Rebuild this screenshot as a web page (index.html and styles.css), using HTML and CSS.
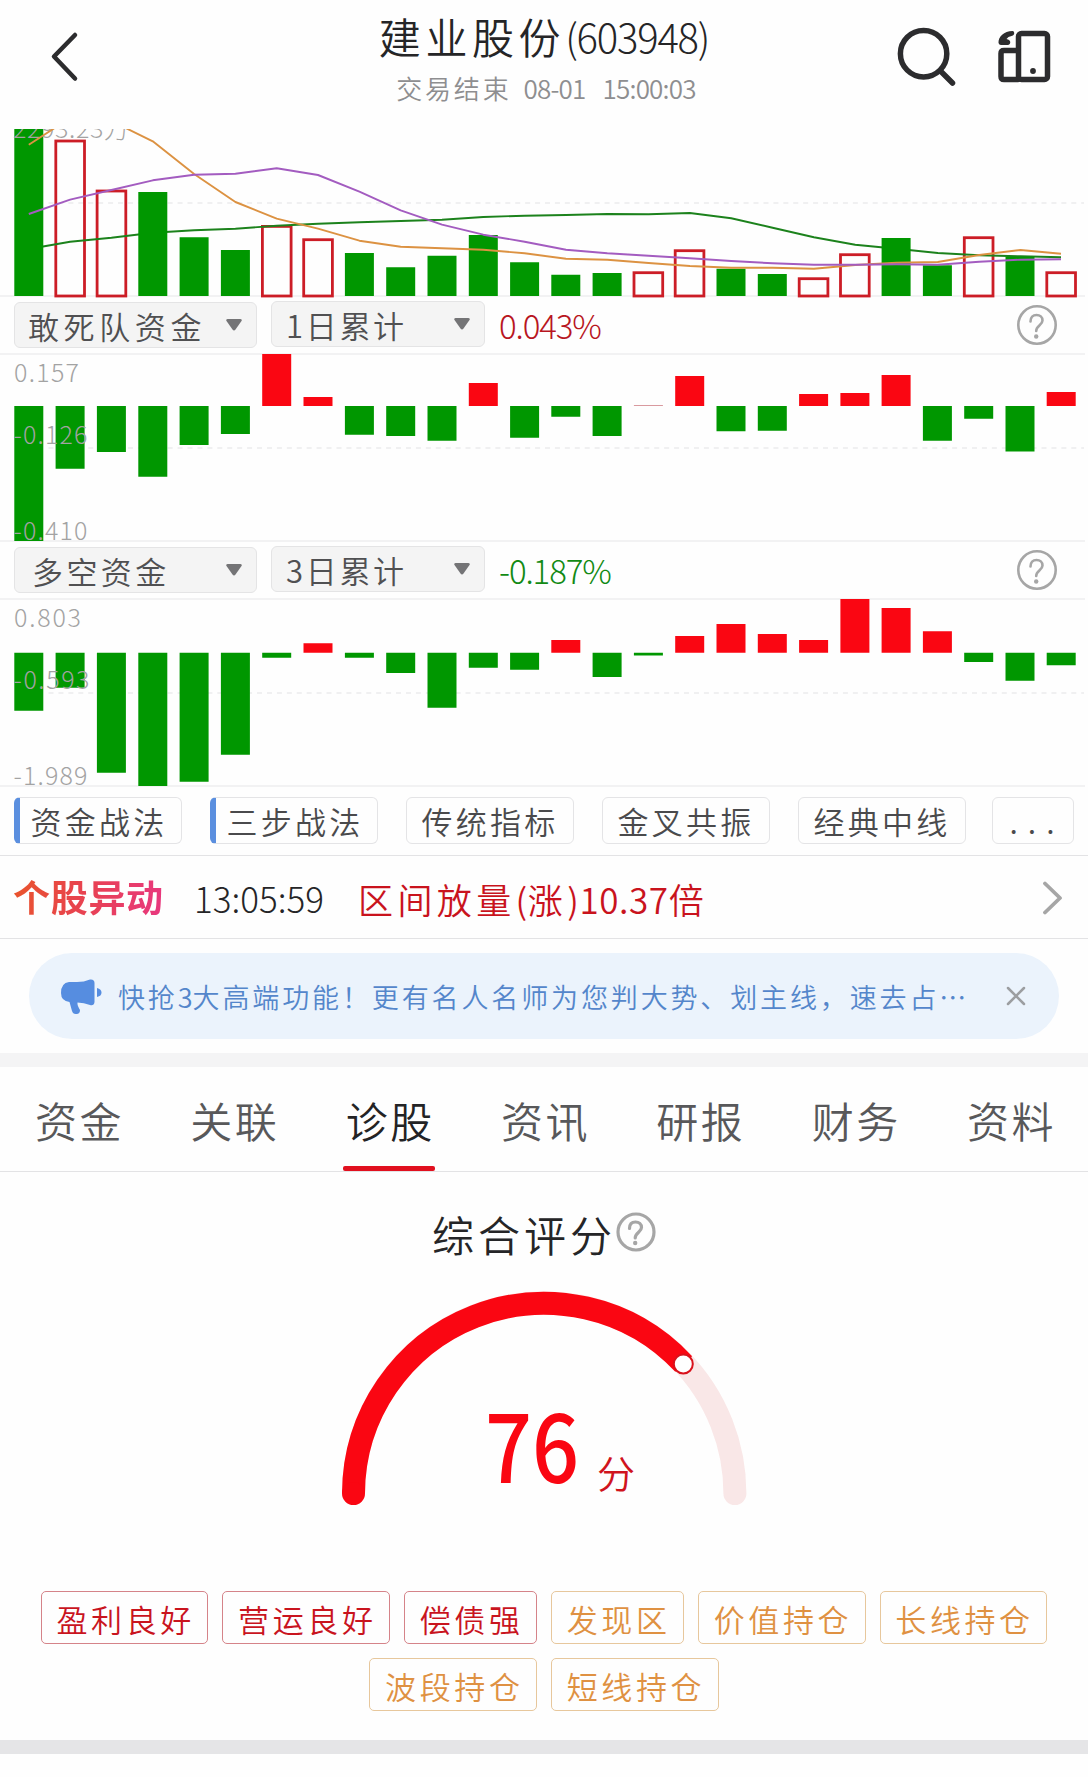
FILE: index.html
```html
<!DOCTYPE html>
<html lang="zh-CN">
<head>
<meta charset="utf-8">
<title>建业股份(603948)</title>
<link rel="stylesheet" href="styles.css">
</head>
<body>
<header class="header">
  <svg class="back" width="64" height="60" viewBox="32 27 64 60"><path d="M75 35L54 56.500L75 78.500" /></svg>
  <div class="heading">
    <h1 class="title">建业股份<span class="code">(603948)</span></h1>
    <p class="status">交易结束<span class="date">08-01</span><span class="time">15:00:03</span></p>
  </div>
  <svg class="actions" width="164" height="70" viewBox="892 22 164 70">
    <circle cx="923.600" cy="53.700" r="23.200"/>
    <path d="M941 71.500L952.500 83"/>
    <rect x="1018.500" y="33.500" width="29" height="46" rx="3"/>
    <path d="M1018 50.500H1004Q1001 50.500 1001 53.500V76.500Q1001 79.500 1004 79.500H1018"/>
    <circle class="solid" cx="1033" cy="71" r="2.900"/>
    <path class="solid" d="M1012.500 31C1004 31 998 37 998.500 43Q999 45 1001 45H1008Q1011 44 1010 41Q1009 39.500 1006.500 39Q1008 36.500 1011.500 36Q1015 35 1014 32Q1013.500 31 1012.500 31Z"/>
  </svg>
</header>

<section class="volume">
  <svg class="chart" width="1088" height="169" viewBox="0 129 1088 169">
    <path class="rule" d="M0 296H1085"/>
    <path class="dash" d="M48.500 203H1084"/>
    <g class="hollow">
      <rect x="55.800" y="141" width="28.700" height="155"/><rect x="97.100" y="191" width="28.700" height="105"/>
      <rect x="262.400" y="226.400" width="28.700" height="69.600"/><rect x="303.700" y="239.700" width="28.700" height="56.300"/>
      <rect x="634" y="272.700" width="28.700" height="23.300"/><rect x="675.200" y="250.700" width="28.700" height="45.300"/>
      <rect x="799.200" y="278.700" width="28.700" height="17.300"/><rect x="840.500" y="254.700" width="28.700" height="41.300"/>
      <rect x="964.300" y="237.700" width="28.700" height="58.300"/><rect x="1046.800" y="272.700" width="28.700" height="23.300"/>
    </g>
    <polyline class="ma ma-green" points="28.8,249 70.1,241.7 111.4,237.7 152.8,232.7 194.1,230.3 235.4,228.7 276.7,225.7 318,223.7 359.4,222.3 400.7,221 442,219.7 483.3,217 524.6,215.7 566,215 607.3,214 648.6,214.3 689.9,213 731.2,218.3 772.6,227.7 813.9,237.3 855.2,244.7 896.5,248.7 937.8,253 979.2,255.3 1020.5,256.3 1061,257.3"/>
    <path class="bar down" d="M28.800 296V129M152.800 296V192M194.100 296V237.300M235.400 296V250M359.400 296V253M400.700 296V267.300M442 296V255.700M483.300 296V235M524.600 296V262.300M565.800 296V274.700M607.100 296V273M731 296V268.700M772.300 296V274M896.100 296V238M937.400 296V265.300M1020 296V256.700"/>
    <text class="scale" x="13" y="137.500" textLength="116">2293.23万</text>
    <polyline class="ma ma-orange" points="28.8,144.7 70.1,118 111.4,121 152.8,141.3 194.1,174 235.4,202 276.7,218.7 318,228.7 359.4,240.7 400.7,246.7 442,248.3 483.3,249.7 524.6,253.3 566,258.7 607.3,259.7 648.6,263 689.9,266 731.2,267.7 772.6,267.7 813.9,268.7 855.2,265 896.5,262.7 937.8,262 979.2,255 1020.5,250 1061,253.7"/>
    <polyline class="ma ma-purple" points="28.8,214 70.1,199.7 111.4,190 152.8,180.3 194.1,174.7 235.4,173.7 276.7,168.3 318,175 359.4,191.7 400.7,210.3 442,224.7 483.3,234.7 524.6,241.7 566,249.7 607.3,253.3 648.6,255.7 689.9,258.3 731.2,261 772.6,263.3 813.9,264.7 855.2,264.7 896.5,264.3 937.8,264.7 979.2,261.7 1020.5,259.7 1061,259.3"/>
  </svg>
</section>

<section class="indicator">
  <div class="controls">
    <div class="select wide"><span>敢死队资金</span><svg width="16" height="12" viewBox="0 0 16 12"><path d="M1.500 0H14.500Q16.500 .5 15.500 2L9.500 10.500Q8 12.500 6.500 10.500L.5 2Q-.5 .5 1.500 0Z"/></svg></div>
    <div class="select"><span>1日累计</span><svg width="16" height="12" viewBox="0 0 16 12"><path d="M1.500 0H14.500Q16.500 .5 15.500 2L9.500 10.500Q8 12.500 6.500 10.500L.5 2Q-.5 .5 1.500 0Z"/></svg></div>
    <span class="value up-text">0.043%</span>
    <svg class="help" width="40" height="40" viewBox="0 0 40 40"><circle cx="20" cy="20" r="18.700"/><path d="M13.500 16.500C13.500 12 16 10 19.500 10C23 10 25.500 12 25.500 15.500C25.500 20 19.200 20.500 19.200 26"/><circle class="point" cx="19.200" cy="31.500" r="2.200"/></svg>
  </div>
  <svg class="chart" width="1088" height="190" viewBox="0 353 1088 190">
    <path class="rule" d="M0 354H1085M0 541H1085"/>
    <path class="dash" d="M48.500 448H1084"/>
    <path class="bar down" d="M28.800 406V541M70.100 406V468.700M111.400 406V452M152.800 406V476.700M194.100 406V445M235.400 406V434M359.400 406V434.700M400.700 406V436M442 406V440.700M524.600 406V437.700M565.800 406V416.700M607.100 406V436M731 406V431.300M772.300 406V430.700M937.400 406V440.700M978.700 406V418.700M1020 406V451.500"/>
    <path class="bar up" d="M276.700 406V354M318 406V397M483.300 406V383M689.700 406V376M813.600 406V394M854.900 406V393M896.100 406V375M1061.200 406V392"/>
    <path class="bar faint" d="M648.400 406V405"/>
    <g class="scale"><text x="14" y="382" textLength="65">0.157</text><text x="13.500" y="444" textLength="74">-0.126</text><text x="13.500" y="540" textLength="74">-0.410</text></g>
  </svg>
</section>

<section class="indicator">
  <div class="controls">
    <div class="select wide"><span class="inset">多空资金</span><svg width="16" height="12" viewBox="0 0 16 12"><path d="M1.500 0H14.500Q16.500 .5 15.500 2L9.500 10.500Q8 12.500 6.500 10.500L.5 2Q-.5 .5 1.500 0Z"/></svg></div>
    <div class="select"><span>3日累计</span><svg width="16" height="12" viewBox="0 0 16 12"><path d="M1.500 0H14.500Q16.500 .5 15.500 2L9.500 10.500Q8 12.500 6.500 10.500L.5 2Q-.5 .5 1.500 0Z"/></svg></div>
    <span class="value down-text">-0.187%</span>
    <svg class="help" width="40" height="40" viewBox="0 0 40 40"><circle cx="20" cy="20" r="18.700"/><path d="M13.500 16.500C13.500 12 16 10 19.500 10C23 10 25.500 12 25.500 15.500C25.500 20 19.200 20.500 19.200 26"/><circle class="point" cx="19.200" cy="31.500" r="2.200"/></svg>
  </div>
  <svg class="chart" width="1088" height="190" viewBox="0 598 1088 190">
    <path class="rule" d="M0 599H1085M0 786H1085"/>
    <path class="dash" d="M48.500 693H1084"/>
    <path class="bar down" d="M28.800 652.700V710.700M70.100 652.700V687.700M111.400 652.700V772.700M152.800 652.700V786M194.100 652.700V781.700M235.400 652.700V754.700M276.700 652.700V657.700M359.400 652.700V657.700M400.700 652.700V673M442 652.700V707.700M483.300 652.700V667.700M524.600 652.700V669.700M607.100 652.700V677M648.400 652.700V655.500M978.700 652.700V662M1020 652.700V680.700M1061.200 652.700V665.300"/>
    <path class="bar up" d="M318 652.700V643.300M565.800 652.700V640M689.700 652.700V636M731 652.700V624M772.300 652.700V634M813.600 652.700V640M854.900 652.700V599M896.100 652.700V608M937.400 652.700V631.300"/>
    <g class="scale"><text x="14" y="627" textLength="67">0.803</text><text x="13.500" y="689" textLength="76">-0.593</text><text x="13.500" y="785" textLength="74">-1.989</text></g>
  </svg>
</section>

<nav class="tactics">
  <a class="tactic marked">资金战法</a><a class="tactic marked">三步战法</a><a class="tactic">传统指标</a><a class="tactic">金叉共振</a><a class="tactic">经典中线</a><a class="tactic more">...</a>
</nav>

<section class="alert">
  <strong class="alert-name">个股异动</strong>
  <span class="alert-time">13:05:59</span>
  <span class="alert-text">区间放量<span class="num">(</span>涨<span class="num">)10.37</span>倍</span>
  <svg class="arrow" width="20" height="34" viewBox="0 0 20 34"><path d="M2 2.500L17 17L2 31.500"/></svg>
</section>

<section class="promo-wrap">
  <div class="promo">
    <svg class="horn" width="41" height="36" viewBox="61 979 41 36"><path d="M69 982H77Q84 982 90 979.500Q94.500 979 94.500 983V1002Q94 1006 90 1005Q84 1002.500 77.500 1002.500Q77 1005 80 1010Q80 1014 76.500 1014Q73 1014.500 72 1011L69.500 1002Q61 1001 61 993Q61 983 69 982Z"/><path d="M97 988Q101.500 989 101.500 992.500Q101.500 996 97 997Z"/></svg>
    <span class="promo-text">快抢<span class="three">3</span>大高端功能！更有名人名师为您判大势、划主线，速去占…</span>
    <svg class="close" width="20" height="20" viewBox="0 0 20 20"><path d="M2 2L18 18M18 2L2 18"/></svg>
  </div>
</section>

<nav class="tabs">
  <a class="tab">资金</a><a class="tab">关联</a><a class="tab active">诊股</a><a class="tab">资讯</a><a class="tab">研报</a><a class="tab">财务</a><a class="tab">资料</a>
</nav>

<section class="score">
  <h2 class="score-title"><span>综合评分</span><svg class="help strong" width="40" height="40" viewBox="0 0 40 40"><circle cx="20" cy="20" r="18"/><path d="M13.500 16.500C13.500 12 16 10 19.500 10C23 10 25.500 12 25.500 15.500C25.500 20 19.200 20.500 19.200 26"/><circle class="point" cx="19.200" cy="31" r="2.200"/></svg></h2>
  <svg class="gauge" width="408" height="216" viewBox="340 1290 408 216">
    <path class="track" d="M353.500 1493.500A190.700 190.700 0 0 1 734.900 1493.500"/>
    <path class="fill" d="M353.500 1493.500A190.700 190.700 0 0 1 683.700 1364"/>
    <circle class="start" cx="353.500" cy="1493.500" r="11.500"/>
    <circle class="knob" cx="683.300" cy="1364" r="9.500"/>
    <text class="points" x="485" y="1483" textLength="94" lengthAdjust="spacingAndGlyphs">76</text>
    <text class="unit" x="597" y="1488">分</text>
  </svg>
  <div class="tags">
    <span class="tag good">盈利良好</span><span class="tag good">营运良好</span><span class="tag good">偿债强</span><span class="tag">发现区</span><span class="tag">价值持仓</span><span class="tag">长线持仓</span><span class="tag">波段持仓</span><span class="tag">短线持仓</span>
  </div>
</section>
</body>
</html>
```
FILE: styles.css
```css
* { box-sizing: border-box; }
body {
  margin: 0;
  width: 1088px;
  height: 1777px;
  overflow: hidden;
  background: #fefefe;
  color: #252527;
  font-family: "Noto Sans CJK SC", sans-serif;
  font-weight: 350;
}
svg { display: block; flex: none; }
h1, h2, p { margin: 0; font-weight: 350; }

/* Header */
.header {
  height: 129px;
  display: flex;
  justify-content: space-between;
  padding: 0 32px;
}
.header .back { margin-top: 27px; margin-right: 100px; }
.header .actions { margin-top: 22px; }
.back path, .actions * {
  fill: none;
  stroke: #2c2c2e;
  stroke-width: 5.5;
  stroke-linecap: round;
  stroke-linejoin: round;
}
.back path { stroke-width: 4.5; }
.actions .solid { fill: #2c2c2e; stroke: none; }
.heading { text-align: center; padding-top: 7px; }
.title { font-size: 42px; line-height: 58px; letter-spacing: 4.6px; white-space: nowrap; }
.code { font-size: 40px; letter-spacing: -1.2px; font-weight: 300; position: relative; top: -1px; }
.status {
  font-size: 26px;
  line-height: 40px;
  padding: 2px 0 0 4px;
  letter-spacing: 2.8px;
  color: #8e8e90;
  white-space: nowrap;
}
.date, .time { letter-spacing: -.8px; margin-left: 12px; }
.time { margin-left: 17px; letter-spacing: -.8px; }

/* Charts */
.volume { height: 169px; }
.indicator { height: 245px; }
.indicator .chart, .gauge { overflow: visible; }
.rule { stroke: #f2f2f3; stroke-width: 2; }
.dash { stroke: #f0f0f1; stroke-width: 2; stroke-dasharray: 5 4.93; }
.hollow rect { fill: none; stroke: #cc1d26; stroke-width: 2.8; }
.bar { fill: none; stroke-width: 29; }
.down { stroke: #009700; }
.up { stroke: #fa0612; }
.faint { stroke: #d99a9f; }
.ma { fill: none; stroke-width: 1.9; stroke-linejoin: round; }
.ma-green { stroke: #1c821c; }
.ma-orange { stroke: #dc9242; }
.ma-purple { stroke: #a35cc0; }
.scale { fill: #a3a3a3; font-size: 25px; font-weight: 300; }

.controls { height: 55px; display: flex; align-items: flex-start; padding: 4px 0 0 14px; }
.select {
  width: 214px;
  height: 46px;
  margin: -1px 14px 0 0;
  padding: 0 14px 0 14px;
  display: flex;
  align-items: center;
  justify-content: space-between;
  border: 1px solid #e4e4e5;
  border-radius: 6px;
  background: #f4f4f4;
  color: #505052;
  font-size: 31px;
  letter-spacing: 2.7px;
}
.select.wide { width: 243px; margin: 0 14px 0 0; padding-left: 13px; letter-spacing: 4.6px; }
.select .inset { padding-left: 4px; letter-spacing: 3.4px; }
.select svg { fill: #747476; margin-bottom: 0; }
.value { font-size: 33px; line-height: 46px; letter-spacing: -1.1px; font-weight: 300; }
.up-text { color: #b8161f; }
.down-text { color: #128a14; }
.help { fill: none; stroke: #a6a6a6; stroke-width: 2.6; stroke-linecap: round; }
.help .point { fill: #a6a6a6; stroke: none; }
.controls .help { margin: 3px 31px 0 auto; }

/* Tactic shortcuts */
.tactics {
  height: 68px;
  padding: 9px 14px 0;
  display: flex;
  gap: 28px;
  border-bottom: 1px solid #e3e3e5;
}
.tactic {
  width: 168px;
  height: 47px;
  border: 1px solid #e4e4e6;
  border-radius: 6px;
  text-align: center;
  font-size: 31px;
  line-height: 46px;
  letter-spacing: 3.3px;
  color: #4a4a4c;
}
.tactic.marked { border-left: 6px solid #5b8fdf; padding-right: 3px; }
.tactic.more { width: 82px; letter-spacing: 10px; padding-left: 8px; margin-left: -2px; }

/* Price alert */
.alert {
  height: 83px;
  padding: 0 25px 0 14px;
  display: flex;
  align-items: center;
  border-bottom: 1px solid #e3e3e5;
  white-space: nowrap;
}
.alert-name {
  width: 181px;
  font-size: 37px;
  font-weight: 700;
  line-height: 50px;
  letter-spacing: .7px;
  margin: -2px 0 0 -1px;
  color: transparent;
  background: linear-gradient(100deg, #e9552b 0, #e8434e 70px, #e8387c 150px);
  background-clip: text;
  -webkit-background-clip: text;
}
.alert-time { width: 164px; font-size: 35px; letter-spacing: 0; font-weight: 300; }
.alert-text { font-size: 35px; letter-spacing: 4.4px; color: #c9131d; padding-top: 2px; }
.alert-text .num { letter-spacing: .6px; }
.arrow { margin-left: auto; margin-top: 1px; fill: none; stroke: #a6a6a6; stroke-width: 3.8; stroke-linecap: round; stroke-linejoin: round; }

/* Promotion banner */
.promo-wrap { padding: 14px 29px; border-bottom: 14px solid #f4f4f5; }
.promo {
  height: 86px;
  padding: 0 33px 0 32px;
  border-radius: 43px;
  display: flex;
  align-items: center;
  background: #ebf3fc;
}
.horn { fill: #568de0; margin: 2px 16px 0 0; }
.promo-text { font-size: 27px; letter-spacing: 2.87px; color: #5486cb; white-space: nowrap; }
.three { letter-spacing: 0; }
.close { margin-left: auto; fill: none; stroke: #9c9ea1; stroke-width: 2.5; stroke-linecap: round; }

/* Section tabs */
.tabs {
  height: 105px;
  display: flex;
  justify-content: space-between;
  padding: 0 31px 0 34px;
  border-bottom: 1px solid #e3e3e5;
}
.tab { width: 91px; text-align: center; font-size: 42px; line-height: 106px; letter-spacing: 2.5px; color: #58585a; white-space: nowrap; }
.tab.active { color: #232325; position: relative; }
.tab.active::after { content: ""; position: absolute; left: -2px; bottom: 0; width: 92px; height: 5px; border-radius: 2px; background: #e1101f; }

/* Diagnosis score */
.score {
  height: 582px;
  padding-top: 34px;
  display: flex;
  flex-direction: column;
  align-items: center;
  border-bottom: 14px solid #e5e5e7;
}
.score-title { height: 60px; display: flex; align-items: center; font-size: 42px; letter-spacing: 4px; }
.score-title span { padding-bottom: 6px; }
.help.strong { stroke-width: 3.2; margin-bottom: 8px; }
.gauge { margin-top: 24px; }
.track, .fill { fill: none; stroke-width: 23; stroke-linecap: round; }
.track { stroke: #f9e7e7; }
.fill { stroke: #fa0612; stroke-linecap: butt; }
.start { fill: #fa0612; }
.knob { fill: #fff; stroke: #d9111b; stroke-width: 2; }
.points { fill: #fa0612; font-size: 93px; font-weight: 500; }
.unit { fill: #d0141d; font-size: 38px; font-weight: 350; }
.tags {
  width: 1040px;
  margin-top: 85px;
  display: flex;
  flex-wrap: wrap;
  justify-content: center;
  gap: 14px;
}
.tag {
  height: 53px;
  padding: 0 12.5px 0 14.7px;
  border: 1px solid #e7c79c;
  border-radius: 5px;
  font-size: 31px;
  line-height: 53px;
  letter-spacing: 3.6px;
  color: #df9142;
}
.tag.good { border-color: #d58389; color: #c9141e; }
```
